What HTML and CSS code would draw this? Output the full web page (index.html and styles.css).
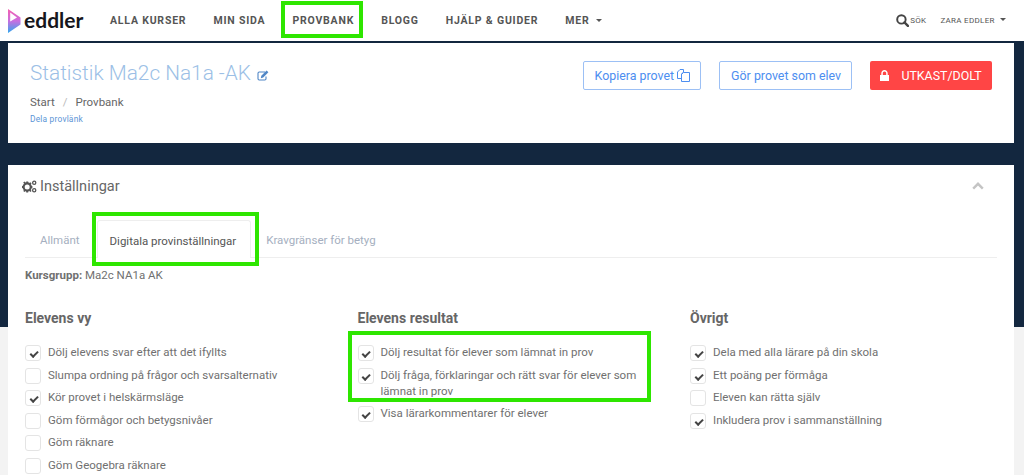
FILE: index.html
```html
<!DOCTYPE html>
<html lang="sv">
<head>
    <meta charset="UTF-8">
    <meta name="viewport" content="width=device-width, initial-scale=1.0">
    <title>Statistik Ma2c Na1a -AK</title>
    <link rel="stylesheet" href="styles.css">
</head>
<body>
    <header class="topbar">
        <a class="logo" href="#">
            <svg class="logo-mark" width="13" height="24" viewBox="0 0 13 24">
                <defs>
                    <linearGradient id="logoGrad" x1="0" y1="0" x2="0" y2="1">
                        <stop offset="0" stop-color="#f55fae"/>
                        <stop offset="0.5" stop-color="#c86ee0"/>
                        <stop offset="1" stop-color="#2fa8ee"/>
                    </linearGradient>
                </defs>
                <path fill="url(#logoGrad)" d="M0 0L12.5 8.5V15.5L0 24ZM2.2 3.6V12.5L9 8.5Z" fill-rule="evenodd"/>
            </svg>
            <span class="logo-text">eddler</span>
        </a>
        <nav class="mainnav">
            <a href="#">ALLA KURSER</a>
            <a href="#">MIN SIDA</a>
            <a href="#" class="marked">PROVBANK</a>
            <a href="#">BLOGG</a>
            <a href="#">HJÄLP &amp; GUIDER</a>
            <a href="#">MER <span class="caret"></span></a>
        </nav>
        <div class="usernav">
            <a href="#" class="search">
                <svg width="13" height="13" viewBox="0 0 12 12"><circle cx="5" cy="5" r="3.9" fill="none" stroke="#444" stroke-width="1.8"/><path d="M7.8 7.8L11 11" stroke="#444" stroke-width="2.2" stroke-linecap="round"/></svg>
                SÖK
            </a>
            <a href="#">ZARA EDDLER <span class="caret"></span></a>
        </div>
    </header>

    <section class="card head-card">
        <div class="head-left">
            <h1 class="title">Statistik Ma2c Na1a -AK
                <svg class="edit-icon" width="12" height="11" viewBox="0 0 12 11"><path d="M8 2H2.2C1.4 2 1 2.5 1 3.2V8.8C1 9.5 1.4 10 2.2 10H7.8C8.6 10 9 9.5 9 8.8V6.5" fill="none" stroke="#4f86c6" stroke-width="1.1"/><path d="M3.8 8.2L4.3 5.8L9.6 .6L11.4 2.3L6.2 7.6Z" fill="#4f86c6"/></svg>
            </h1>
            <div class="crumbs"><span>Start</span><span class="sep">/</span><span>Provbank</span></div>
            <a href="#" class="share">Dela provlänk</a>
        </div>
        <div class="head-actions">
            <a href="#" class="btn btn-outline">Kopiera provet
                <svg width="13" height="13" viewBox="0 0 13 13" fill="none" stroke="#4d8ef0" stroke-width="1"><path d="M.5 3L3 .5H6.5V3L4.5 5V9.5H.5Z"/><path d="M4.5 5.5L6.5 3.5H12.5V12.5H4.5Z"/></svg>
            </a>
            <a href="#" class="btn btn-outline">Gör provet som elev</a>
            <a href="#" class="btn btn-danger">
                <svg width="9" height="11" viewBox="0 0 9 11"><path fill="#fff" d="M0 5H1.3V3.3C1.3 1.4 2.7 0 4.5 0S7.7 1.4 7.7 3.3V5H9V11H0ZM2.8 5H6.2V3.3C6.2 2.3 5.5 1.5 4.5 1.5S2.8 2.3 2.8 3.3Z"/></svg>
                UTKAST/DOLT
            </a>
        </div>
    </section>

    <section class="card settings-card">
        <div class="settings-head">
            <h2 class="settings-title">
                <svg width="15" height="13" viewBox="0 0 15 13"><g fill="#555"><circle cx="5.2" cy="7" r="3.6" fill="none" stroke="#555" stroke-width="2.2"/><path d="M4.2 1.6h2v2h-2zM4.2 10.4h2v2h-2zM0 6h2v2H0zM8.4 6h2v2h-2zM1.2 2.6l1.4-1 1.2 1.5-1.4 1zM7 10.6l1.4-1 1.2 1.5-1.4 1zM8.2 2.2l1.4 1-1.2 1.5-1.4-1zM2.4 9.4l1.4 1-1.2 1.5-1.4-1z"/></g><circle cx="12.2" cy="2.8" r="1.6" fill="none" stroke="#555" stroke-width="1.3"/><circle cx="12.2" cy="10.2" r="1.6" fill="none" stroke="#555" stroke-width="1.3"/></svg>
                Inställningar
            </h2>
            <svg class="chevron" width="12" height="8" viewBox="0 0 12 8"><path d="M1.2 6.6L6 1.8L10.8 6.6" fill="none" stroke="#c4c4c4" stroke-width="2.4"/></svg>
        </div>

        <div class="tabs">
            <a href="#" class="tab">Allmänt</a>
            <a href="#" class="tab tab-active">Digitala provinställningar</a>
            <a href="#" class="tab">Kravgränser för betyg</a>
        </div>
        <p class="course-group"><b>Kursgrupp:</b> Ma2c NA1a AK</p>

        <div class="columns">
            <div class="column">
                <h3>Elevens vy</h3>
                <ul class="options">
                    <li class="on">Dölj elevens svar efter att det ifyllts</li>
                    <li>Slumpa ordning på frågor och svarsalternativ</li>
                    <li class="on">Kör provet i helskärmsläge</li>
                    <li>Göm förmågor och betygsnivåer</li>
                    <li>Göm räknare</li>
                    <li>Göm Geogebra räknare</li>
                </ul>
            </div>
            <div class="column">
                <h3>Elevens resultat</h3>
                <ul class="options options-marked">
                    <li class="on">Dölj resultat för elever som lämnat in prov</li>
                    <li class="on">Dölj fråga, förklaringar och rätt svar för elever som lämnat in prov</li>
                    <li class="on">Visa lärarkommentarer för elever</li>
                </ul>
            </div>
            <div class="column">
                <h3>Övrigt</h3>
                <ul class="options">
                    <li class="on">Dela med alla lärare på din skola</li>
                    <li class="on">Ett poäng per förmåga</li>
                    <li>Eleven kan rätta själv</li>
                    <li class="on">Inkludera prov i sammanställning</li>
                </ul>
            </div>
        </div>
    </section>
</body>
</html>
```

FILE: styles.css
```css
*, *::before, *::after {
    margin: 0;
    padding: 0;
    box-sizing: border-box;
}

html, body {
    height: 475px;
    overflow: hidden;
}

body {
    font-family: Roboto, "Liberation Sans", sans-serif;
    font-size: 11.5px;
    color: #707070;
    background: linear-gradient(#13273f 327px, #f3f3f3 327px);
}

a {
    color: inherit;
    text-decoration: none;
}

.topbar {
    height: 41px;
    background: #fff;
    display: flex;
    align-items: center;
    padding: 0 18px 0 8px;
}

.logo {
    display: flex;
    align-items: center;
    gap: 3px;
    width: 102px;
}

.logo-text {
    font-family: Lato, sans-serif;
    font-size: 21px;
    font-weight: 700;
    color: #16161c;
    line-height: 1;
    margin-top: -3px;
}

.mainnav {
    display: flex;
    gap: 27px;
    font-size: 10.5px;
    font-weight: 700;
    letter-spacing: .8px;
    color: #555;
}

.mainnav .marked {
    position: relative;
}

.mainnav .marked::after {
    content: "";
    position: absolute;
    left: -11px;
    right: -9px;
    top: -13px;
    bottom: -11px;
    border: 4px solid #2ee600;
}

.caret {
    display: inline-block;
    width: 0;
    height: 0;
    margin-left: 3px;
    vertical-align: 2px;
    border-top: 3.5px solid #555;
    border-left: 3.5px solid transparent;
    border-right: 3.5px solid transparent;
}

.usernav {
    margin-left: auto;
    display: flex;
    align-items: center;
    gap: 14px;
    font-size: 8px;
    letter-spacing: .3px;
    color: #555;
}

.search {
    display: flex;
    align-items: center;
    gap: 1px;
}

.card {
    background: #fff;
    margin: 2px 10px 0 8px;
}

.head-card {
    height: 100px;
    display: flex;
    justify-content: space-between;
    padding: 17px 22px 0 22px;
}

.title {
    font-size: 20.8px;
    font-weight: 300;
    color: #9cbfe6;
    line-height: 26px;
}

.edit-icon {
    margin-left: 1px;
    vertical-align: -1px;
}

.crumbs {
    margin-top: 9px;
    display: flex;
    gap: 8px;
    color: #666;
    line-height: 14px;
}

.crumbs .sep {
    color: #bbb;
}

.share {
    display: block;
    margin-top: 4px;
    font-size: 8.4px;
    letter-spacing: .2px;
    line-height: 12px;
    color: #5b94d6;
}

.head-actions {
    display: flex;
    gap: 18px;
    margin-top: 1px;
}

.btn {
    height: 29px;
    display: flex;
    align-items: center;
    justify-content: center;
    gap: 3px;
    border-radius: 2px;
    font-size: 12.4px;
}

.btn-outline {
    border: 1px solid #9cc0f5;
    color: #4d8ef0;
    padding: 0 10px 0 11px;
}

.btn-danger {
    background: #ff4545;
    color: #fff;
    width: 122px;
    gap: 12px;
}

.settings-card {
    margin-top: 22px;
    padding: 0 17px 0 17px;
    height: 310px;
}

.settings-head {
    height: 42px;
    display: flex;
    align-items: center;
    justify-content: space-between;
    padding-right: 13px;
}

.settings-title {
    font-size: 14.5px;
    font-weight: 400;
    color: #666;
    display: flex;
    align-items: center;
    gap: 3px;
    margin-left: -3px;
}

.tabs {
    margin-top: 13px;
    height: 38px;
    display: flex;
    border-bottom: 1px solid #eee;
    color: #a5afc0;
}

.tab {
    padding: 0 15px;
    display: flex;
    align-items: center;
    padding-top: 2px;
}

.tab-active {
    position: relative;
    margin: 0 0 -1px 2px;
    padding: 2px 14px 0 12px;
    color: #555;
    background: #fff;
    border: 1px solid #eee;
    border-bottom: 0;
    border-radius: 3px 3px 0 0;
}

.tab-active::after {
    content: "";
    position: absolute;
    left: -6px;
    right: -9px;
    top: -9px;
    bottom: -8px;
    border: 4px solid #2ee600;
}

.course-group {
    margin-top: 9px;
    line-height: 16px;
}

.course-group b {
    font-weight: 700;
}

.columns {
    margin-top: 26px;
    display: grid;
    grid-template-columns: repeat(3, 332.5px);
}

.column h3 {
    font-size: 14px;
    font-weight: 700;
    color: #666;
    line-height: 18px;
    margin-bottom: 17px;
}

.options {
    list-style: none;
    display: flex;
    flex-direction: column;
    gap: 6.5px;
    width: 290px;
}

.options li {
    position: relative;
    padding-left: 23px;
    line-height: 16px;
}

.options li::before {
    content: "";
    position: absolute;
    left: 0;
    top: 1px;
    width: 16px;
    height: 16px;
    border: 1px solid #e4e4e4;
    border-radius: 3px;
}

.options li.on::after {
    content: "";
    position: absolute;
    left: 4.5px;
    top: 7px;
    width: 8px;
    height: 4.5px;
    border-left: 2px solid #444;
    border-bottom: 2px solid #444;
    transform: rotate(-45deg);
}

.options-marked {
    position: relative;
}

.options-marked::after {
    content: "";
    position: absolute;
    left: -10px;
    top: -13px;
    width: 303px;
    height: 71px;
    border: 4px solid #2ee600;
}
```
